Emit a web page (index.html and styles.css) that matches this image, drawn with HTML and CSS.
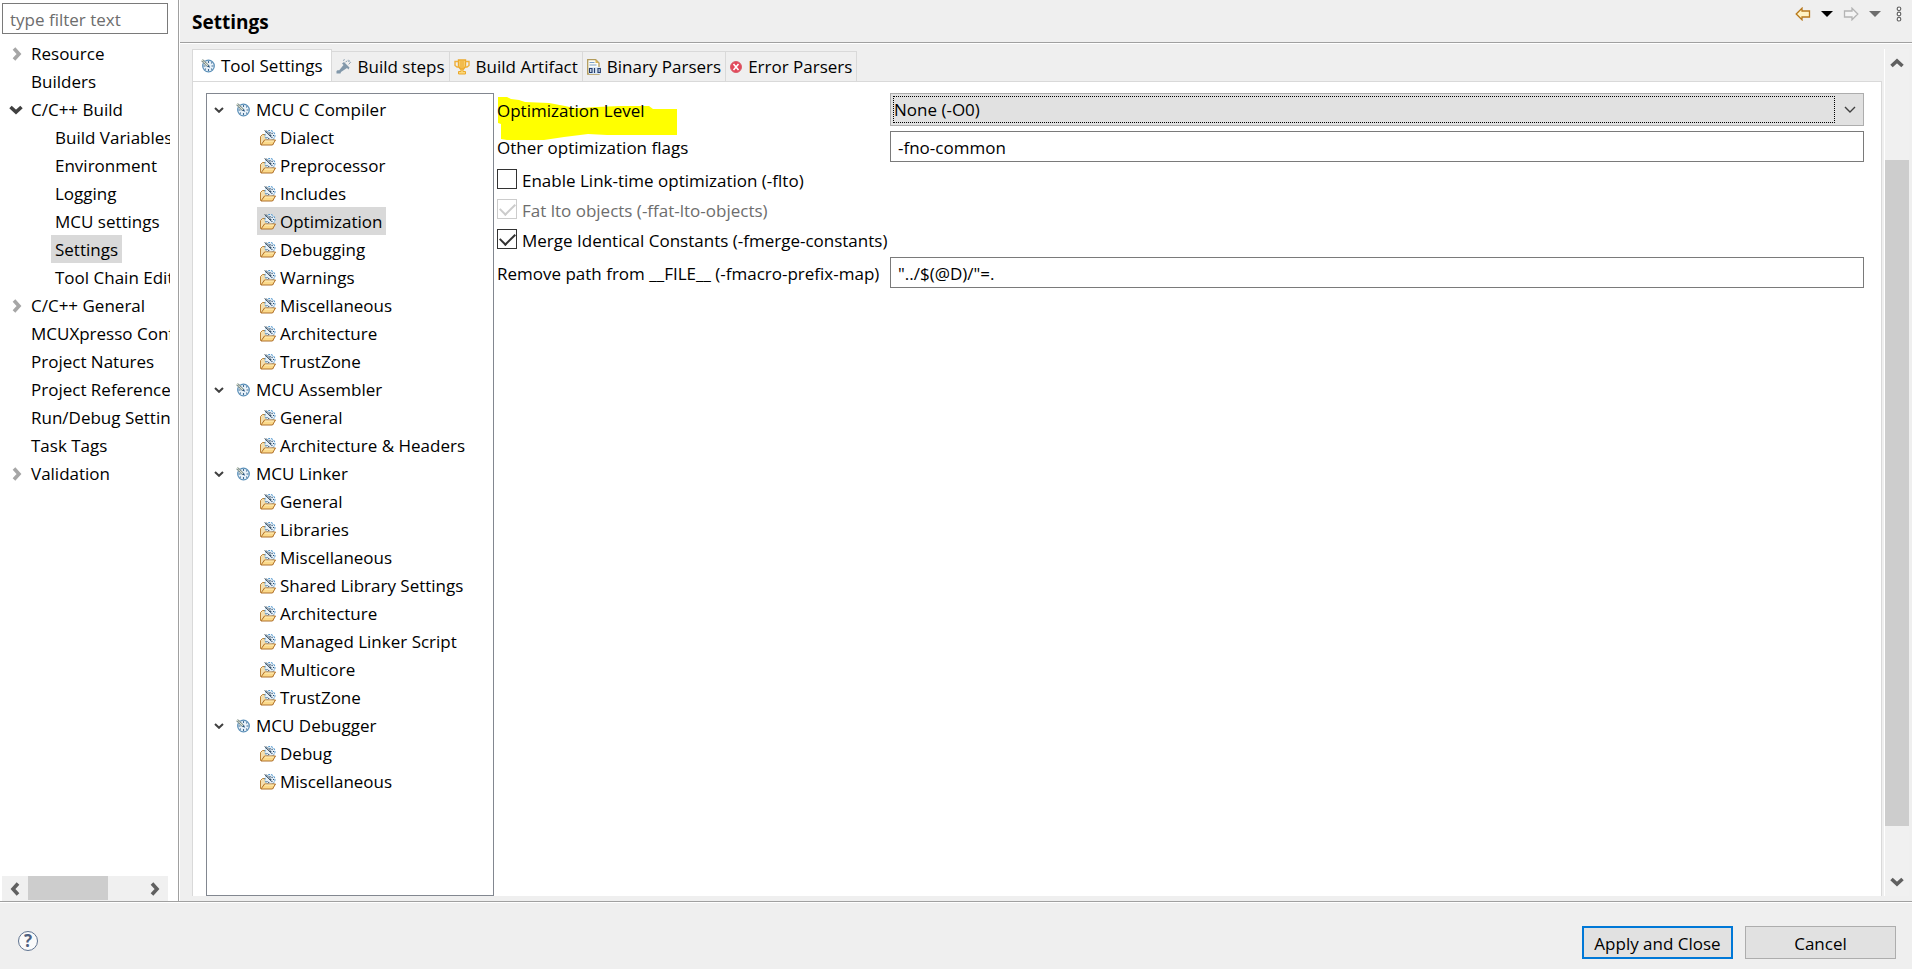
FILE: index.html
```html
<!DOCTYPE html>
<html lang="en">
<head>
  <meta charset="UTF-8">
  <meta name="viewport" content="width=device-width, initial-scale=1.0">
  <title>Settings</title>
  <link rel="stylesheet" href="styles.css">
</head>
<body>
  <!-- shared icons -->
  <svg class="symbols" aria-hidden="true">
    <symbol id="dial" viewBox="0 0 14 14">
      <circle cx="7.500" cy="7" r="5.800" fill="#e9f2fa" stroke="#5a8fb8" stroke-width="1.200"/>
      <path d="M7.500 2v2M7.500 10v2M10.500 7h2M2.500 7h2M10.200 4.300l1-1M10.200 9.700l1 1M4.800 9.700l-1 1" stroke="#3f6c94" stroke-width="1.100"/>
      <path d="M1 1l6 6" stroke="#dfe3cf" stroke-width="2.600"/>
      <path d="M.5 1.800l6 6M1.800.5l6 6" stroke="#53697a" stroke-width=".8"/>
      <path d="M1.500 3l1.500-1.500M3.200 4.700l1.500-1.500" stroke="#6a7b80" stroke-width=".8"/>
      <path d="M6 7.500L7.800 6l1.400 2.800z" fill="#24527c"/>
    </symbol>
    <symbol id="folder" viewBox="0 0 16 16">
      <path d="M.5 14.500V6.500l2-2h3L7 6h6v8.500z" fill="#f5dfae" stroke="#bb8238"/>
      <circle cx="10" cy="5.500" r="5" fill="#e6f0f8" stroke="#4b93cc" stroke-dasharray="2 1"/>
      <path d="M10 2v1.500M13 5.500h1M8.500 9l.5-1M12.300 7.800l-.8-.8M12.500 3l-.8.8M6.500 7.500h1" stroke="#2c4a68" stroke-width="1.100"/>
      <path d="M4.500.5l6 6M5.700.2l5.500 5.500" stroke="#2f4152" stroke-width=".8"/>
      <path d="M9.200 5l2 .2-.2 2z" fill="#1e3c5c"/>
      <path d="M1 15l3.500-5h11l-3 5z" fill="#fbd98a" stroke="#b0702a"/>
      <path d="M5 11h9" stroke="#fff0bd"/>
    </symbol>
    <symbol id="open" viewBox="0 0 10 6">
      <path d="M1 1l4 3.800L9 1" fill="none" stroke="#404040" stroke-width="2"/>
    </symbol>
    <symbol id="chevron" viewBox="0 0 10 14">
      <path d="M2 1.500L7 7l-5 5.500" fill="none" stroke="currentColor" stroke-width="3.600"/>
    </symbol>
    <symbol id="chevron-down" viewBox="0 0 14 10">
      <path d="M1.500 2L7 7l5.500-5" fill="none" stroke="currentColor" stroke-width="3.600"/>
    </symbol>
  </svg>

  <div class="dialog">
    <div class="body">
      <nav class="sidebar">
        <input class="filter" type="text" placeholder="type filter text" aria-label="Filter">
        <ul class="pages">
          <li><a href="#"><svg class="closed"><use href="#chevron"/></svg>Resource</a></li>
          <li><a href="#">Builders</a></li>
          <li><a href="#"><svg class="expanded"><use href="#chevron-down"/></svg>C/C++ Build</a>
            <ul>
              <li><a href="#">Build Variables</a></li>
              <li><a href="#">Environment</a></li>
              <li><a href="#">Logging</a></li>
              <li><a href="#">MCU settings</a></li>
              <li><a href="#" class="selected">Settings</a></li>
              <li><a href="#">Tool Chain Editor</a></li>
            </ul>
          </li>
          <li><a href="#"><svg class="closed"><use href="#chevron"/></svg>C/C++ General</a></li>
          <li><a href="#">MCUXpresso Config Tools</a></li>
          <li><a href="#">Project Natures</a></li>
          <li><a href="#">Project References</a></li>
          <li><a href="#">Run/Debug Settings</a></li>
          <li><a href="#">Task Tags</a></li>
          <li><a href="#"><svg class="closed"><use href="#chevron"/></svg>Validation</a></li>
        </ul>
        <div class="hscroll">
          <button type="button" aria-label="Scroll left"><svg class="flip"><use href="#chevron"/></svg></button>
          <div class="track"><div class="thumb"></div></div>
          <button type="button" aria-label="Scroll right"><svg><use href="#chevron"/></svg></button>
        </div>
      </nav>

      <main class="main">
        <header class="header">
          <h1>Settings</h1>
          <div class="history">
            <button type="button" aria-label="Back">
              <svg width="16" height="14" viewBox="0 0 16 14"><path d="M1.200 7L7 1.200V4h7.500v6H7v2.800z" fill="#fff3c4" stroke="#b8791c" stroke-width="1.300"/></svg>
            </button>
            <button type="button" aria-label="Back history">
              <svg width="12" height="6" viewBox="0 0 12 6"><path d="M0 0h12L6 6z" fill="#000"/></svg>
            </button>
            <button type="button" aria-label="Forward">
              <svg width="16" height="14" viewBox="0 0 16 14"><path d="M14.800 7L9 1.200V4H1.500v6H9v2.800z" fill="#f4f4f4" stroke="#b4b4b4" stroke-width="1.300"/></svg>
            </button>
            <button type="button" aria-label="Forward history">
              <svg width="12" height="6" viewBox="0 0 12 6"><path d="M0 0h12L6 6z" fill="#6d6d6d"/></svg>
            </button>
            <button type="button" class="menu" aria-label="View menu">
              <svg width="6" height="16" viewBox="0 0 6 16"><g fill="#fff" stroke="#666" stroke-width="1.200"><circle cx="3" cy="2.800" r="1.800"/><circle cx="3" cy="8" r="1.800"/><circle cx="3" cy="13.200" r="1.800"/></g></svg>
            </button>
          </div>
        </header>

        <div class="content">
          <div class="page">
            <div class="tabs">
              <button type="button" class="tab active"><svg width="14" height="14"><use href="#dial"/></svg>Tool Settings</button>
              <button type="button" class="tab">
                <svg width="16" height="16" viewBox="0 0 16 16"><path d="M.5 14.500V12l1.500-1 1 .5L7.500 6 6 4.500 8 3l5.500 5.500-1 2L11 9l-6 4-.5 1.500z" fill="#8298aa"/><path d="M7 1.500l2-1M9.500 3l2.500-1.500 2 2.500-1.500 1.500M12.500.8L15 4" fill="none" stroke="#8ba0b1" stroke-dasharray="2 1"/></svg>Build steps</button>
              <button type="button" class="tab">
                <svg width="16" height="16" viewBox="0 0 16 16"><path d="M4.500 1h7v6.500l-2 2.500h-3l-2-2.500z" fill="#fbd87b" stroke="#eba92c" stroke-width="1.400"/><path d="M4.500 2.500H1v4L3 8h2M11.500 2.500H15v4L13 8h-2M7 2v7M9 2v7" fill="none" stroke="#efb03a" stroke-width="1.400"/><path d="M7 10h2v2.500h2.500V15h-7v-2.500H7z" fill="#fbd87b" stroke="#eba92c"/></svg>Build Artifact</button>
              <button type="button" class="tab">
                <svg width="14" height="16" viewBox="0 0 14 16"><path d="M.700.700h8L12 4v11H.700z" fill="#fdfdf6" stroke="#b29b5b" stroke-width="1.300"/><path d="M8.500.5V4H12z" fill="#d9b65c"/><path d="M2.500 3.500h5M2.500 6h7" stroke="#7aa0c8" stroke-width="1.200"/><path d="M2 8h12v7H2z" fill="#dce9f5"/><path d="M2.500 9.500H5v4H2.500zM7.500 9v5M11 9.500h2.300v4H11z" fill="none" stroke="#263f70" stroke-width="1.200"/></svg>Binary Parsers</button>
              <button type="button" class="tab">
                <svg width="12" height="12" viewBox="0 0 12 12"><circle cx="6" cy="6" r="5.500" fill="#e3475a" stroke="#d8606c"/><path d="M3.500 3l5 6M8.500 3l-5 6" stroke="#fff" stroke-width="1.600"/></svg>Error Parsers</button>
            </div>

            <div class="panel">
              <ul class="tools">
                <li><a href="#"><svg class="arrow"><use href="#open"/></svg><svg class="dial"><use href="#dial"/></svg>MCU C Compiler</a>
                  <ul>
                    <li><a href="#"><svg><use href="#folder"/></svg>Dialect</a></li>
                    <li><a href="#"><svg><use href="#folder"/></svg>Preprocessor</a></li>
                    <li><a href="#"><svg><use href="#folder"/></svg>Includes</a></li>
                    <li><a href="#" class="selected"><svg><use href="#folder"/></svg>Optimization</a></li>
                    <li><a href="#"><svg><use href="#folder"/></svg>Debugging</a></li>
                    <li><a href="#"><svg><use href="#folder"/></svg>Warnings</a></li>
                    <li><a href="#"><svg><use href="#folder"/></svg>Miscellaneous</a></li>
                    <li><a href="#"><svg><use href="#folder"/></svg>Architecture</a></li>
                    <li><a href="#"><svg><use href="#folder"/></svg>TrustZone</a></li>
                  </ul>
                </li>
                <li><a href="#"><svg class="arrow"><use href="#open"/></svg><svg class="dial"><use href="#dial"/></svg>MCU Assembler</a>
                  <ul>
                    <li><a href="#"><svg><use href="#folder"/></svg>General</a></li>
                    <li><a href="#"><svg><use href="#folder"/></svg>Architecture &amp; Headers</a></li>
                  </ul>
                </li>
                <li><a href="#"><svg class="arrow"><use href="#open"/></svg><svg class="dial"><use href="#dial"/></svg>MCU Linker</a>
                  <ul>
                    <li><a href="#"><svg><use href="#folder"/></svg>General</a></li>
                    <li><a href="#"><svg><use href="#folder"/></svg>Libraries</a></li>
                    <li><a href="#"><svg><use href="#folder"/></svg>Miscellaneous</a></li>
                    <li><a href="#"><svg><use href="#folder"/></svg>Shared Library Settings</a></li>
                    <li><a href="#"><svg><use href="#folder"/></svg>Architecture</a></li>
                    <li><a href="#"><svg><use href="#folder"/></svg>Managed Linker Script</a></li>
                    <li><a href="#"><svg><use href="#folder"/></svg>Multicore</a></li>
                    <li><a href="#"><svg><use href="#folder"/></svg>TrustZone</a></li>
                  </ul>
                </li>
                <li><a href="#"><svg class="arrow"><use href="#open"/></svg><svg class="dial"><use href="#dial"/></svg>MCU Debugger</a>
                  <ul>
                    <li><a href="#"><svg><use href="#folder"/></svg>Debug</a></li>
                    <li><a href="#"><svg><use href="#folder"/></svg>Miscellaneous</a></li>
                  </ul>
                </li>
              </ul>

              <form class="options">
                <label class="marked" for="level">
                  <svg class="marker" width="180" height="43" viewBox="0 0 180 43"><path d="M0 0h9l4 2 8 1 6 2 24 1 16 3 9 2h8l14-1 24-1h29l4 3h24v26h-70l-19-1-24 3-20 3H9l-6-1V27l-3-1z" fill="#ff0"/></svg>
                  <span>Optimization Level</span>
                </label>
                <div class="combo">
                  <select id="level">
                    <option>None (-O0)</option>
                    <option>Optimize (-O1)</option>
                    <option>Optimize more (-O2)</option>
                    <option>Optimize most (-O3)</option>
                    <option>Optimize for size (-Os)</option>
                  </select>
                  <svg width="12" height="8" viewBox="0 0 12 8"><path d="M1 1l5 5 5-5" fill="none" stroke="#404040" stroke-width="1.400"/></svg>
                </div>

                <label for="flags">Other optimization flags</label>
                <input class="field" id="flags" type="text" value="-fno-common">

                <label class="check"><input type="checkbox">Enable Link-time optimization (-flto)</label>
                <label class="check disabled"><input type="checkbox" checked disabled>Fat lto objects (-ffat-lto-objects)</label>
                <label class="check"><input type="checkbox" checked>Merge Identical Constants (-fmerge-constants)</label>

                <label for="prefix">Remove path from __FILE__ (-fmacro-prefix-map)</label>
                <input class="field" id="prefix" type="text" value="&quot;../$(@D)/&quot;=.">
              </form>
            </div>
          </div>

          <div class="vscroll">
            <button type="button" aria-label="Scroll up"><svg class="flip"><use href="#chevron-down"/></svg></button>
            <div class="track"><div class="thumb"></div></div>
            <button type="button" aria-label="Scroll down"><svg><use href="#chevron-down"/></svg></button>
          </div>
        </div>
      </main>
    </div>

    <footer class="footer">
      <button type="button" class="help" aria-label="Help">?</button>
      <div class="actions">
        <button type="button" class="btn default">Apply and Close</button>
        <button type="button" class="btn">Cancel</button>
      </div>
    </footer>
  </div>
</body>
</html>
```
FILE: styles.css
```css
* {
  box-sizing: border-box;
}
body {
  margin: 0;
  font-family: "Open Sans", "Noto Sans", sans-serif;
  font-size: 17px;
  line-height: 28px;
  color: #000;
  background: #efefef;
}
button, input, select {
  font: inherit;
  color: inherit;
}
button {
  padding: 0;
  border: none;
  background: none;
}
ul {
  list-style: none;
  margin: 0;
  padding: 0;
}
a {
  color: inherit;
  text-decoration: none;
  white-space: nowrap;
}
svg {
  flex: none;
}
.symbols {
  display: none;
}
.dialog {
  display: flex;
  flex-direction: column;
  height: 100vh;
}
.body {
  display: flex;
  flex: 1;
  min-height: 0;
}

/* left page list */
.sidebar {
  display: flex;
  flex-direction: column;
  flex: none;
  width: 179px;
  padding: 3px 10px 0 2px;
  background: #fff;
  border-right: 1px solid #a0a0a0;
}
.filter {
  width: 100%;
  height: 31px;
  padding: 2px 7px 0;
  border: 1px solid #7a7a7a;
  background: #fff;
}
.filter::placeholder {
  color: #6d6d6d;
}
.pages {
  flex: 1;
  min-height: 0;
  margin: 5px -2px 0 0;
  overflow: hidden;
}
.pages a {
  display: inline-flex;
  align-items: center;
  height: 28px;
  padding: 2px 4px 0;
  margin-left: 25px;
  vertical-align: top;
}
.pages li {
  height: 28px;
}
.pages li:has(ul) {
  height: auto;
}
.pages li li a {
  margin-left: 49px;
}
.pages svg {
  width: 10px;
  height: 14px;
  margin: 0 9px 0 -19px;
  color: #a6a6a6;
}
.pages .expanded {
  width: 14px;
  height: 10px;
  margin: 0 8px 0 -22px;
  color: #404040;
}
.selected {
  background: #d9d9d9;
}
.flip {
  transform: rotate(180deg);
}
.hscroll, .vscroll {
  display: flex;
  color: #606060;
  background: #f0f0f0;
}
.hscroll {
  height: 25px;
}
.hscroll button {
  display: grid;
  place-items: center;
  width: 26px;
}
.hscroll svg {
  width: 10px;
  height: 14px;
}
.hscroll .track {
  flex: 1;
}
.hscroll .thumb {
  width: 70%;
  height: 24px;
  background: #cdcdcd;
}

/* right side */
.main {
  display: flex;
  flex-direction: column;
  flex: 1;
  min-width: 0;
  border-left: 1px solid #fff;
}
.header {
  display: flex;
  justify-content: space-between;
  height: 44px;
  padding: 0 10px 0 12px;
  border-bottom: 1px solid #fff;
  box-shadow: inset 0 -1px #a0a0a0;
}
.header h1 {
  margin: 0;
  font-size: 19px;
  line-height: 44px;
}
.history {
  display: flex;
  align-items: center;
  gap: 10px;
  height: 28px;
}
.history button {
  display: flex;
}
.history .menu {
  margin-left: 5px;
}
.content {
  display: flex;
  flex: 1;
  min-height: 0;
  padding: 5px 3px 5px 12px;
}
.page {
  display: flex;
  flex-direction: column;
  flex: 1;
  min-width: 0;
}
.tabs {
  display: flex;
  align-items: flex-end;
}
.tab {
  display: flex;
  align-items: center;
  gap: 6px;
  height: 30px;
  padding: 1px 4px 0;
  border: 1px solid #d9d9d9;
  border-width: 1px 1px 0 0;
  white-space: nowrap;
}
.tab.active {
  height: 33px;
  margin-bottom: -1px;
  padding: 0 8px;
  border-left-width: 1px;
  background: #fff;
}
.panel {
  display: flex;
  flex: 1;
  min-height: 0;
  padding: 11px 17px 0 13px;
  border: 1px solid #d9d9d9;
  border-bottom: none;
  background: #fff;
}
.tools {
  flex: none;
  width: 288px;
  padding: 1px 7px;
  border: 1px solid #828790;
  overflow: hidden;
}
.tools li {
  min-height: 28px;
}
.tools a {
  display: flex;
  align-items: center;
  width: fit-content;
  height: 28px;
  padding-top: 2px;
}
.tools .arrow {
  width: 10px;
  height: 6px;
  margin-right: 12px;
}
.tools .dial {
  width: 14px;
  height: 14px;
  margin-right: 6px;
}
.tools li li a {
  gap: 4px;
  margin-left: 43px;
  padding: 2px 4px 0 3px;
}
.tools li li svg {
  width: 16px;
  height: 16px;
}

/* option form */
.options {
  display: grid;
  grid-template-columns: 388px 1fr;
  grid-auto-rows: min-content;
  align-items: center;
  align-content: start;
  column-gap: 5px;
  row-gap: 5px;
  flex: 1;
  min-width: 0;
  padding-left: 3px;
  white-space: nowrap;
}
.options label {
  padding-top: 2px;
}
.marked {
  position: relative;
}
.marked span {
  position: relative;
}
.marker {
  position: absolute;
  top: 2px;
  left: 1px;
}
.combo {
  display: flex;
  align-items: center;
  height: 33px;
  padding: 2px 7px 2px 2px;
  border: 1px solid #adadad;
  background: #e1e1e1;
}
.combo select {
  flex: 1;
  height: 27px;
  margin-right: 9px;
  padding: 1px 0 0;
  border: 1px dotted #000;
  background: none;
  appearance: none;
  line-height: 24px;
}
.field {
  width: 100%;
  height: 31px;
  padding: 2px 7px 0;
  border: 1px solid #7a7a7a;
  background: #fff;
}
.check {
  grid-column: 1 / -1;
  display: flex;
  align-items: center;
  gap: 5px;
  height: 25px;
}
.check input {
  display: grid;
  place-items: center;
  width: 20px;
  height: 20px;
  margin: 0 0 4px;
  border: 1px solid #333;
  background: #fff;
  appearance: none;
}
.check input:checked::before {
  content: "";
  width: 7px;
  height: 13px;
  margin-bottom: 4px;
  border: solid #333;
  border-width: 0 2px 2px 0;
  transform: rotate(45deg);
}
.check.disabled {
  color: #6d6d6d;
}
.check.disabled input, .check.disabled input::before {
  border-color: #ccc;
}
.vscroll {
  flex-direction: column;
  flex: none;
  width: 25px;
  margin-left: 2px;
  border-left: 1px solid #fff;
}
.vscroll button {
  display: grid;
  place-items: center;
  height: 28px;
}
.vscroll svg {
  width: 14px;
  height: 10px;
}
.vscroll .track {
  flex: 1;
  padding-top: 83px;
}
.vscroll .thumb {
  height: 94%;
  background: #cdcdcd;
}

/* bottom bar */
.footer {
  display: flex;
  justify-content: space-between;
  align-items: center;
  height: 68px;
  padding: 14px 16px 0 18px;
  border-top: 1px solid #a0a0a0;
  box-shadow: inset 0 1px #fff;
}
.help {
  width: 20px;
  height: 20px;
  margin-bottom: 4px;
  border: 1px solid #5f7390;
  border-radius: 50%;
  background: #fafafa;
  color: #4d6080;
  font-size: 17px;
  font-weight: bold;
  line-height: 18px;
}
.actions {
  display: flex;
  gap: 12px;
}
.btn {
  width: 151px;
  height: 33px;
  padding-top: 2px;
  border: 1px solid #adadad;
  background: #e1e1e1;
}
.btn.default {
  border: 2px solid #0078d7;
}
```
